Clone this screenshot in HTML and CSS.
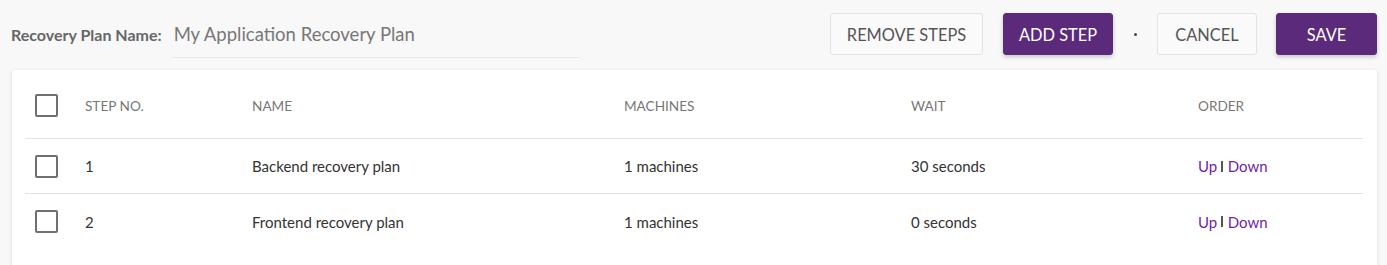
FILE: index.html
```html
<!DOCTYPE html>
<html lang="en">
<head>
  <meta charset="UTF-8">
  <title>Recovery Plan</title>
  <link rel="stylesheet" href="styles.css">
</head>
<body>
  <div class="toolbar">
    <label class="plan-label" for="planName">Recovery Plan Name:</label>
    <input class="plan-input" id="planName" type="text" value="My Application Recovery Plan">
    <div class="actions">
      <button class="btn">Remove Steps</button>
      <button class="btn btn-primary">Add Step</button>
      <span class="dot"></span>
      <button class="btn btn-cancel">Cancel</button>
      <button class="btn btn-primary btn-save">Save</button>
    </div>
  </div>

  <div class="card">
    <div class="table">
      <div class="row head">
        <div class="cell"><span class="check"></span></div>
        <div class="cell">Step No.</div>
        <div class="cell">Name</div>
        <div class="cell">Machines</div>
        <div class="cell">Wait</div>
        <div class="cell">Order</div>
      </div>
      <div class="row">
        <div class="cell"><span class="check"></span></div>
        <div class="cell">1</div>
        <div class="cell">Backend recovery plan</div>
        <div class="cell">1 machines</div>
        <div class="cell">30 seconds</div>
        <div class="cell order"><a href="#">Up</a><span class="sep"></span><a href="#">Down</a></div>
      </div>
      <div class="row">
        <div class="cell"><span class="check"></span></div>
        <div class="cell">2</div>
        <div class="cell">Frontend recovery plan</div>
        <div class="cell">1 machines</div>
        <div class="cell">0 seconds</div>
        <div class="cell order"><a href="#">Up</a><span class="sep"></span><a href="#">Down</a></div>
      </div>
    </div>
  </div>
</body>
</html>
```

FILE: styles.css
```css
* { box-sizing: border-box; }

body {
  margin: 0;
  font-family: Lato, 'Open Sans', sans-serif;
  background: #f8f8f8;
  color: #333;
  overflow: hidden;
}

.toolbar {
  display: flex;
  align-items: center;
  height: 68px;
  padding: 0 10px 0 11px;
}

.plan-label {
  font-size: 16px;
  font-weight: bold;
  color: #666;
}

.plan-input {
  width: 408px;
  margin-left: 9px;
  padding: 0 3px 12px;
  margin-top: 12px;
  border: none;
  border-bottom: 1px solid #eaeaea;
  background: transparent;
  font-family: inherit;
  font-size: 18.5px;
  color: #777;
  outline: none;
}

.actions {
  display: flex;
  align-items: center;
  margin-left: auto;
}

.btn {
  height: 42px;
  width: 153px;
  padding: 0;
  border: 1px solid #e3e3e3;
  border-radius: 3px;
  background: #fafafa;
  font-family: inherit;
  font-size: 16.4px;
  text-transform: uppercase;
  white-space: nowrap;
  color: #555;
  cursor: pointer;
}

.btn-primary {
  width: 110px;
  margin-left: 20px;
  background: #5b2a7b;
  border-color: #5b2a7b;
  color: #fff;
  box-shadow: 0 2px 4px rgba(0,0,0,0.2);
}

.btn-cancel { width: 100px; }
.btn-save { width: 101px; margin-left: 19px; }

.dot {
  width: 3px;
  height: 3px;
  margin: 0 20px 0 21px;
  border-radius: 50%;
  background: #444;
}

.card {
  margin: 2px 10px 0 12px;
  padding: 14px 14px 20px 13px;
  background: #fff;
  border-radius: 3px;
  box-shadow: 0 1px 4px rgba(0,0,0,0.12);
}

.row {
  display: grid;
  grid-template-columns: 50px 167px 372px 287px 287px 1fr;
  align-items: center;
  height: 55px;
  border-bottom: 1px solid #e2e2e2;
  font-size: 15px;
  color: #333;
}

.row:last-child { border-bottom: none; }

.row.head {
  padding-bottom: 11px;
  font-size: 13.6px;
  color: #777;
  text-transform: uppercase;
}

.cell { padding-left: 10px; }

.check {
  display: block;
  width: 23px;
  height: 23px;
  border: 2px solid #707070;
  border-radius: 2px;
}

.order {
  display: flex;
  align-items: center;
}

.order a {
  color: #6f1fa8;
  text-decoration: none;
}

.sep {
  width: 1.5px;
  height: 11px;
  margin: 0 5px 0 4px;
  background: #555;
}
```
